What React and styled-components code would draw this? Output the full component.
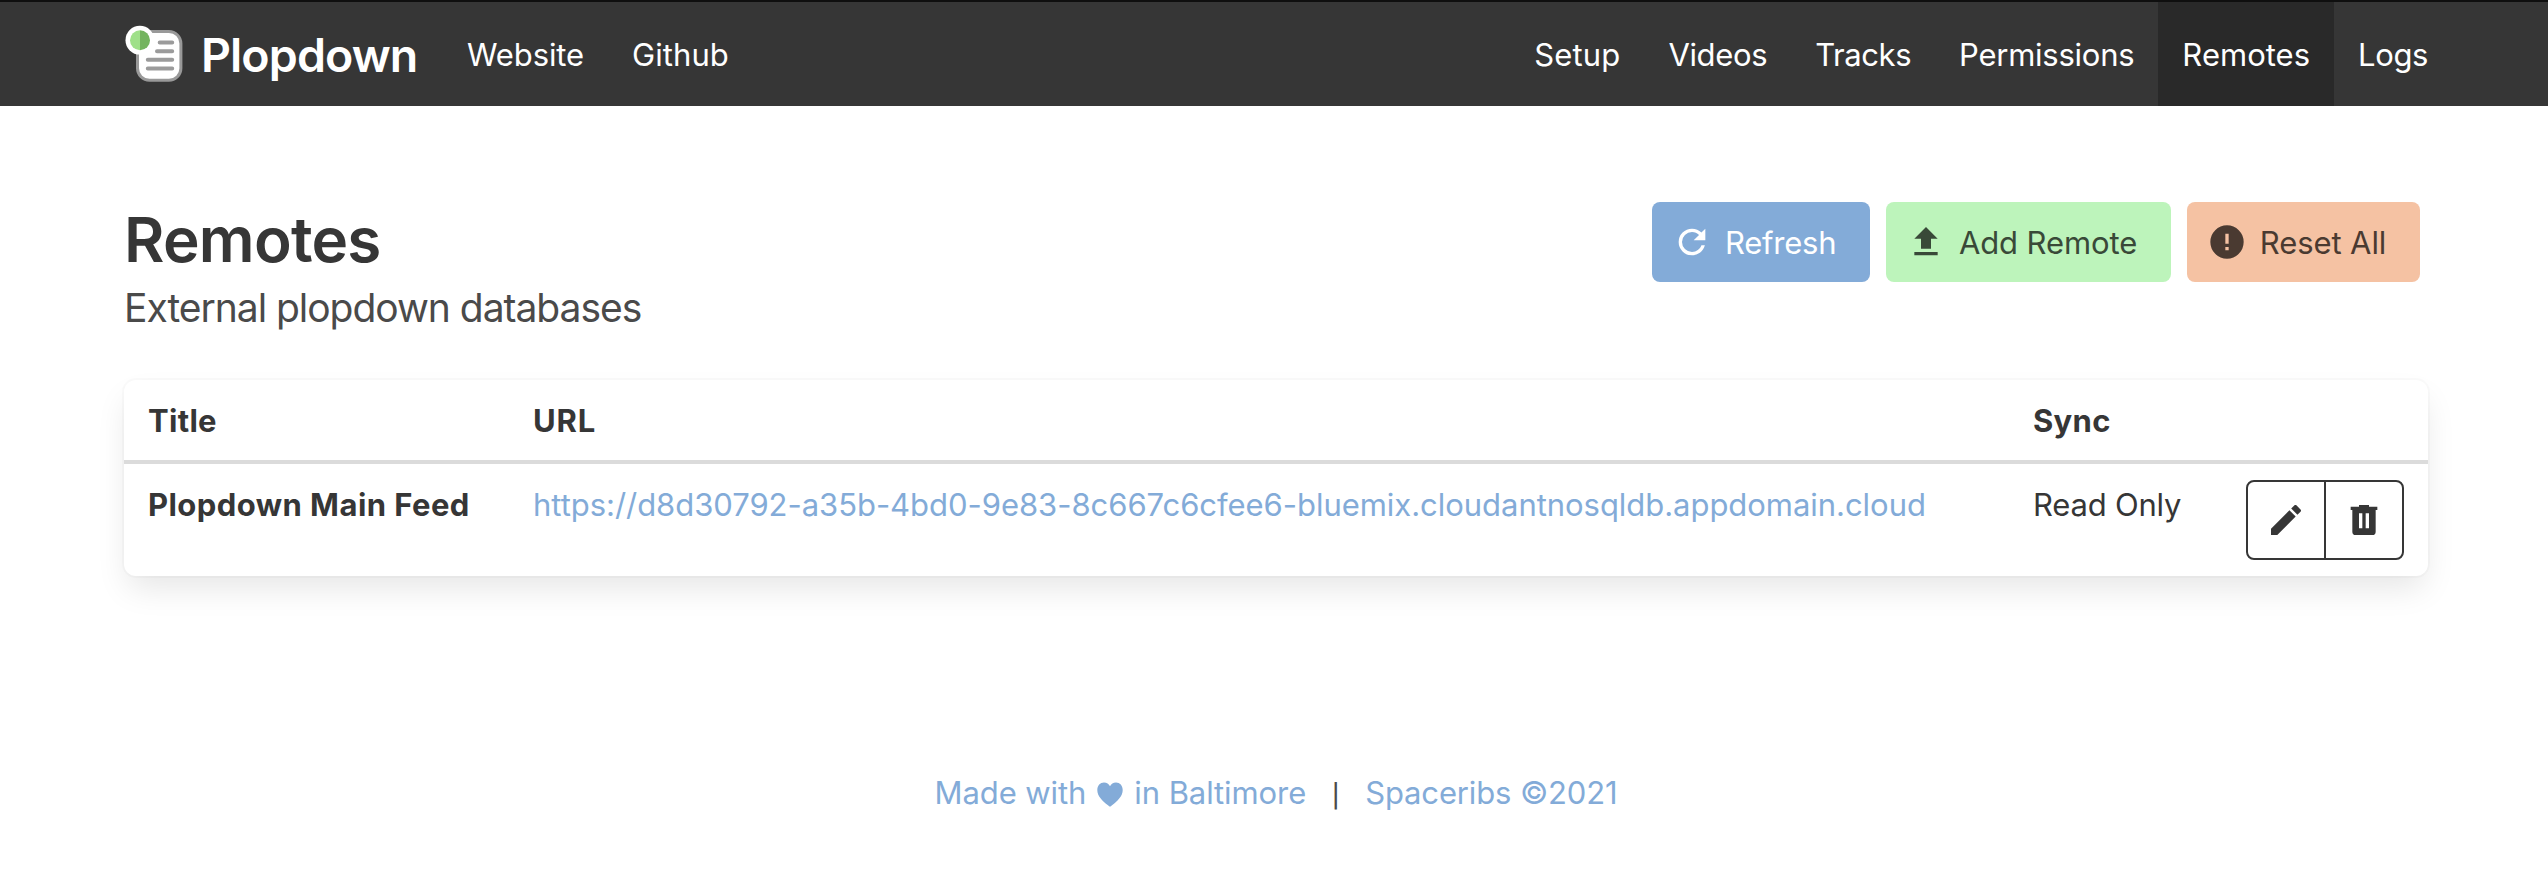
import React from "react";
import styled, { createGlobalStyle, css } from "styled-components";

const GlobalStyle = createGlobalStyle`
  *, *::before, *::after { box-sizing: border-box; }
  html, body { margin: 0; background: #fff; }
  body {
    color: #4a4a4a;
    font-family: Inter, "Liberation Sans", sans-serif;
    font-size: 31px;
    font-weight: 400;
    line-height: 48px;
    overflow-x: hidden;
  }
`;

const tracking = css`
  letter-spacing: ${(p) => p.$tracking || 0}px;
`;

const Page = styled.div`
  width: 2548px;
  height: 890px;
  overflow: hidden;
  display: flex;
  flex-direction: column;
`;

const Navbar = styled.nav`
  height: 106px;
  padding: 0 96px 0 124px;
  border-top: 2px solid #0f0f0f;
  background: #363636;
  color: #fff;
  display: flex;
  align-items: stretch;
  justify-content: space-between;
`;

const NavGroup = styled.div`
  display: flex;
  align-items: stretch;
`;

const Brand = styled.a`
  display: flex;
  align-items: center;
  gap: 17px;
  margin-right: 25.5px;
`;

const BrandName = styled.span`
  padding-top: 1px;
  font-size: 46.5px;
  font-weight: 600;
  letter-spacing: -0.9px;
`;

const NavItem = styled.a`
  display: flex;
  align-items: center;
  padding: 1px 24px 0;
  background: ${(p) => (p.$active ? "#292929" : "transparent")};
  white-space: nowrap;
  ${tracking}
`;

const Container = styled.main`
  width: 2304px;
  margin-left: 124px;
  padding-top: 96px;
`;

const Header = styled.header`
  display: flex;
  justify-content: space-between;
  align-items: flex-start;
  height: 178px;
`;

const Title = styled.h1`
  margin: 2px 0 0;
  color: #363636;
  font-size: 62px;
  font-weight: 600;
  line-height: 72px;
  letter-spacing: -0.75px;
`;

const Subtitle = styled.p`
  margin: 7px 0 0;
  font-size: 39px;
  line-height: 50px;
  letter-spacing: -1.03px;
`;

const Actions = styled.div`
  display: flex;
  gap: 16px;
  padding-right: 8px;
`;

const tones = {
  info: css`background: #83abd8; color: #fff;`,
  success: css`background: #bdf4bb; color: #394938;`,
  danger: css`background: #f5c2a3; color: #4a3a31;`,
};

const Button = styled.button`
  display: flex;
  align-items: center;
  gap: 12.8px;
  height: 80px;
  padding: 0 33.8px 0 20px;
  border: 0;
  border-radius: 8px;
  font: inherit;
  white-space: nowrap;
  ${tracking}
  ${(p) => tones[p.$tone]}
`;

const ButtonLabel = styled.span`
  padding-top: 2px;
`;

const IconSvg = styled.svg`
  display: block;
  width: 40px;
  height: 40px;
  fill: currentColor;
`;

const Card = styled.section`
  border-radius: 12px;
  background: #fff;
  color: #363636;
  box-shadow: 0 16px 32px -4px rgba(10, 10, 10, 0.1), 0 0 0 2px rgba(10, 10, 10, 0.02);
`;

const Row = styled.div`
  display: grid;
  grid-template-columns: 385px 1500px 1fr auto;
`;

const HeadRow = styled(Row)`
  height: 84px;
  border-bottom: 4px solid #dbdbdb;
`;

const BodyRow = styled(Row)`
  height: 112px;
`;

const Cell = styled.div`
  padding: 17px 24px 15px;
  font-weight: ${(p) => (p.$strong ? 700 : 400)};
  white-space: nowrap;
  ${tracking}
`;

const ButtonCell = styled.div`
  padding: 16px 24px;
`;

const Link = styled.a`
  color: #83abd8;
  ${tracking}
`;

const ButtonGroup = styled.div`
  display: flex;
`;

const OutlineButton = styled.button`
  display: flex;
  align-items: center;
  justify-content: center;
  width: 80px;
  height: 80px;
  padding: 0;
  border: 2px solid #363636;
  background: transparent;
  color: #363636;
  &:first-child { border-radius: 8px 0 0 8px; }
  &:last-child { border-radius: 0 8px 8px 0; margin-left: -2px; }
`;

const Footer = styled.footer`
  display: flex;
  align-items: center;
  justify-content: center;
  width: 2304px;
  height: 48px;
  margin: 193px 0 0 124px;
  white-space: nowrap;
`;

const MadeWith = styled(Link)`
  display: flex;
  align-items: center;
`;

const HeartSvg = styled.svg`
  width: 26px;
  height: 25px;
  margin: 2px 11.5px 0 10.5px;
  fill: currentColor;
`;

const Divider = styled.span`
  width: 59px;
  padding-top: 5px;
  font-size: 23px;
  font-weight: 500;
  text-align: center;
`;

const ICONS = {
  refresh:
    "M17.65,6.35C16.2,4.9 14.21,4 12,4A8,8 0 0,0 4,12A8,8 0 0,0 12,20C15.73,20 18.84,17.45 19.73,14H17.65C16.83,16.33 14.61,18 12,18A6,6 0 0,1 6,12A6,6 0 0,1 12,6C13.66,6 15.14,6.69 16.22,7.78L13,11H20V4L17.65,6.35Z",
  upload: "M9,16V10H5L12,3L19,10H15V16H9M5,20V18H19V20H5Z",
  alert:
    "M13,13H11V7H13M13,17H11V15H13M12,2A10,10 0 0,0 2,12A10,10 0 0,0 12,22A10,10 0 0,0 22,12A10,10 0 0,0 12,2Z",
  pencil:
    "M20.71,7.04C21.1,6.65 21.1,6 20.71,5.63L18.37,3.29C18,2.9 17.35,2.9 16.96,3.29L15.12,5.12L18.87,8.87M3,17.25V21H6.75L17.81,9.93L14.06,6.18L3,17.25Z",
  trash:
    "M9,3V4H4V6H5V19A2,2 0 0,0 7,21H17A2,2 0 0,0 19,19V6H20V4H15V3H9M9,8H11V17H9V8M13,8H15V17H13V8Z",
};

const Icon = ({ name }) => (
  <IconSvg viewBox="0 0 24 24" aria-hidden="true">
    <path d={ICONS[name]} />
  </IconSvg>
);

const Logo = () => (
  <svg width="60" height="60" viewBox="0 0 60 60" aria-hidden="true">
    <rect x="13.5" y="7.5" width="43.4" height="48.8" rx="12" fill="#fff" stroke="#999" strokeWidth="3" />
    <g stroke="#9b9b9b" strokeWidth="4" strokeLinecap="round">
      <path d="M35.7 18.5H48.2M33 27.2H48.2M23.8 35.7H48.2M23.8 44.4H48.2" />
    </g>
    <circle cx="15.9" cy="16.2" r="14.4" fill="#fff" />
    <path d="M16 6.2a10 10 0 0 0 0 20z" fill="#9fe089" />
    <path d="M16 6.2a10 10 0 0 1 0 20z" fill="#74b45f" />
  </svg>
);

const Heart = () => (
  <HeartSvg viewBox="0 0 26 25" aria-hidden="true">
    <path d="M13 24.6C12.4 24.6 11.8 24 11 23.3C5.5 18.7 0.3 14.2 0.3 7.9C0.3 3.5 3.2 0.4 7 0.4C9.8 0.4 11.9 1.9 13 4.2C14.1 1.9 16.2 0.4 19 0.4C22.8 0.4 25.7 3.5 25.7 7.9C25.7 14.2 20.5 18.7 15 23.3C14.2 24 13.6 24.6 13 24.6Z" />
  </HeartSvg>
);

const LEFT_NAV = [
  { label: "Website", tracking: -0.1 },
  { label: "Github", tracking: 0.08 },
];

const RIGHT_NAV = [
  { label: "Setup", tracking: 0.15 },
  { label: "Videos", tracking: -0.36 },
  { label: "Tracks", tracking: -0.42 },
  { label: "Permissions", tracking: -0.25 },
  { label: "Remotes", tracking: 0.02, active: true },
  { label: "Logs", tracking: -0.4 },
];

const NavItems = ({ items }) =>
  items.map((item) => (
    <NavItem key={item.label} $active={item.active} $tracking={item.tracking}>
      {item.label}
    </NavItem>
  ));

export default function App() {
  return (
    <Page>
      <GlobalStyle />
      <Navbar>
        <NavGroup>
          <Brand>
            <Logo />
            <BrandName>Plopdown</BrandName>
          </Brand>
          <NavItems items={LEFT_NAV} />
        </NavGroup>
        <NavGroup>
          <NavItems items={RIGHT_NAV} />
        </NavGroup>
      </Navbar>

      <Container>
        <Header>
          <div>
            <Title>Remotes</Title>
            <Subtitle>External plopdown databases</Subtitle>
          </div>
          <Actions>
            <Button $tone="info" $tracking={-0.22}>
              <Icon name="refresh" />
              <ButtonLabel>Refresh</ButtonLabel>
            </Button>
            <Button $tone="success" $tracking={-0.1}>
              <Icon name="upload" />
              <ButtonLabel>Add Remote</ButtonLabel>
            </Button>
            <Button $tone="danger" $tracking={-0.1}>
              <Icon name="alert" />
              <ButtonLabel>Reset All</ButtonLabel>
            </Button>
          </Actions>
        </Header>

        <Card>
          <HeadRow>
            <Cell $strong $tracking={0.3}>Title</Cell>
            <Cell $strong $tracking={0.8}>URL</Cell>
            <Cell $strong $tracking={0.3}>Sync</Cell>
          </HeadRow>
          <BodyRow>
            <Cell $strong $tracking={0.44}>Plopdown Main Feed</Cell>
            <Cell>
              <Link $tracking={-0.04}>
                https://d8d30792-a35b-4bd0-9e83-8c667c6cfee6-bluemix.cloudantnosqldb.appdomain.cloud
              </Link>
            </Cell>
            <Cell $tracking={-0.2}>Read Only</Cell>
            <ButtonCell>
              <ButtonGroup>
                <OutlineButton aria-label="Edit">
                  <Icon name="pencil" />
                </OutlineButton>
                <OutlineButton aria-label="Delete">
                  <Icon name="trash" />
                </OutlineButton>
              </ButtonGroup>
            </ButtonCell>
          </BodyRow>
        </Card>
      </Container>

      <Footer>
        <MadeWith $tracking={-0.08}>
          Made with
          <Heart />
          in Baltimore
        </MadeWith>
        <Divider>|</Divider>
        <Link $tracking={-0.14}>Spaceribs ©2021</Link>
      </Footer>
    </Page>
  );
}
